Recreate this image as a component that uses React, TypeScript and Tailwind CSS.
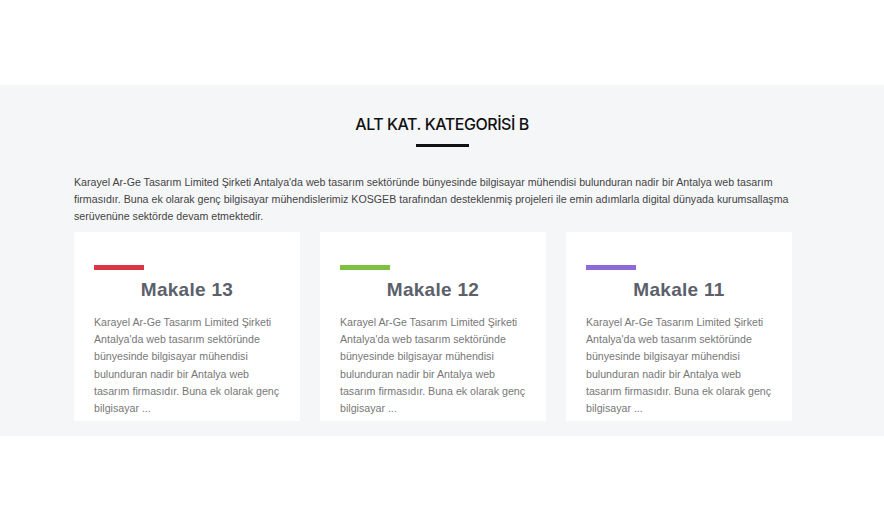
import React from "react";

const body =
  "Karayel Ar-Ge Tasarım Limited Şirketi Antalya'da web tasarım sektöründe bünyesinde bilgisayar mühendisi bulunduran nadir bir Antalya web tasarım firmasıdır. Buna ek olarak genç bilgisayar ...";

const cards = [
  { title: "Makale 13", color: "bg-[#dc3545]" },
  { title: "Makale 12", color: "bg-[#7cc142]" },
  { title: "Makale 11", color: "bg-[#8e6ad8]" },
];

export default function App() {
  return (
    <div className="w-[884px] h-[521px] bg-white" style={{ fontFamily: "'Liberation Sans', Arial, sans-serif" }}>
      <div className="h-[85px]" />
      <div className="bg-[#f5f6f8] h-[351px] pl-[74px] pt-[29px]">
        <div className="w-[736px] flex flex-col items-center">
          <h2
            className="text-[16px] leading-[20px] font-medium text-[#111] tracking-[-0.45px]"
            style={{ fontFamily: "Inter, 'Open Sans', sans-serif" }}
          >
            ALT KAT. KATEGORİSİ B
          </h2>
          <div className="mt-[10px] w-[53px] h-[3px] bg-[#111]" />
        </div>
        <p className="mt-[27px] w-[736px] text-[10.65px] leading-[17px] text-[#444]">
          Karayel Ar-Ge Tasarım Limited Şirketi Antalya'da web tasarım sektöründe bünyesinde bilgisayar mühendisi
          bulunduran nadir bir Antalya web tasarım firmasıdır. Buna ek olarak genç bilgisayar mühendislerimiz KOSGEB
          tarafından desteklenmiş projeleri ile emin adımlarla digital dünyada kurumsallaşma serüvenüne sektörde devam
          etmektedir.
        </p>
        <div className="mt-[7px] flex gap-[20px]">
          {cards.map((c) => (
            <div key={c.title} className="w-[226px] h-[189px] bg-white px-[20px] pt-[33px]">
              <div className={`w-[50px] h-[5px] ${c.color}`} />
              <h3 className="mt-[9px] text-center text-[19px] leading-[22px] font-bold text-[#5b606b] tracking-[0.3px]">
                {c.title}
              </h3>
              <p className="mt-[13px] text-[10.65px] leading-[17.2px] text-[#777]">{body}</p>
            </div>
          ))}
        </div>
      </div>
    </div>
  );
}
